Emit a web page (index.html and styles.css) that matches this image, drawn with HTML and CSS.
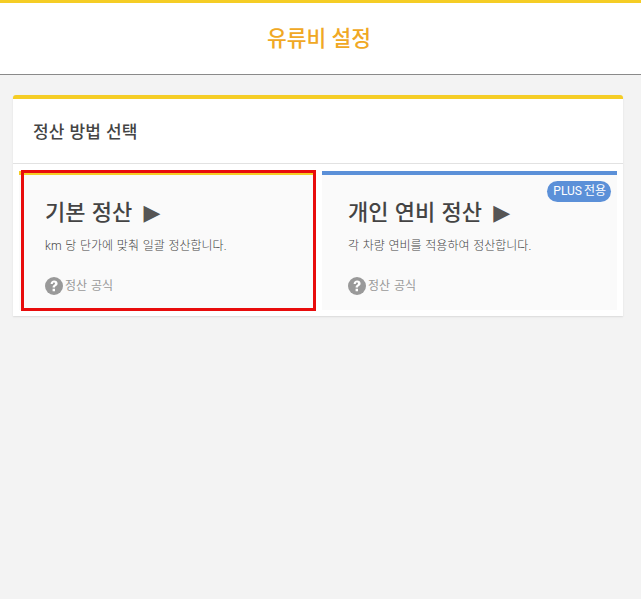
FILE: index.html
```html
<!DOCTYPE html>
<html lang="ko">
<head>
<meta charset="utf-8">
<title>유류비 설정</title>
<link rel="stylesheet" href="styles.css">
</head>
<body>
<header class="top">
  <h1 class="top-title">유류비 설정</h1>
</header>
<main class="panel">
  <h2 class="panel-title">정산 방법 선택</h2>
  <div class="options">
    <section class="option option-basic">
      <h3 class="option-title">기본 정산 <span class="arrow">▶</span></h3>
      <p class="option-desc">km 당 단가에 맞춰 일괄 정산합니다.</p>
      <div class="formula">
        <svg class="help" viewBox="0 0 18 18" aria-hidden="true"><circle cx="9" cy="9" r="9" fill="#999"/><path d="M5.6 7C5.7 4.9 7.1 3.6 9.2 3.6c2 0 3.4 1.2 3.4 2.9 0 1.2-.6 2-1.6 2.6-.8.5-1 .8-1 1.5H7.6c0-1.3.3-1.9 1.3-2.6.8-.5 1.1-.9 1.1-1.4 0-.6-.4-1-1-1-.7 0-1.1.5-1.2 1.4zM7.6 11.8h2.4v2.4H7.6z" fill="#fff"/></svg>
        <span>정산 공식</span>
      </div>
      <div class="selected-mark"></div>
    </section>
    <section class="option option-plus">
      <span class="badge">PLUS 전용</span>
      <h3 class="option-title">개인 연비 정산 <span class="arrow">▶</span></h3>
      <p class="option-desc">각 차량 연비를 적용하여 정산합니다.</p>
      <div class="formula">
        <svg class="help" viewBox="0 0 18 18" aria-hidden="true"><circle cx="9" cy="9" r="9" fill="#999"/><path d="M5.6 7C5.7 4.9 7.1 3.6 9.2 3.6c2 0 3.4 1.2 3.4 2.9 0 1.2-.6 2-1.6 2.6-.8.5-1 .8-1 1.5H7.6c0-1.3.3-1.9 1.3-2.6.8-.5 1.1-.9 1.1-1.4 0-.6-.4-1-1-1-.7 0-1.1.5-1.2 1.4zM7.6 11.8h2.4v2.4H7.6z" fill="#fff"/></svg>
        <span>정산 공식</span>
      </div>
    </section>
  </div>
</main>
</body>
</html>
```
FILE: styles.css
```css
* { box-sizing: border-box; }
html, body { margin: 0; padding: 0; }
body {
  background: #f3f3f3;
  font-family: Roboto, "Noto Sans CJK KR", sans-serif;
  color: #444;
  min-height: 599px;
}
.top {
  height: 75px;
  background: #fff;
  border-top: 3px solid #f5cd25;
  border-bottom: 1px solid #8a8a8a;
  display: flex;
  align-items: center;
  justify-content: center;
  padding-right: 3px;
}
.top-title {
  margin: 0;
  font-size: 21.5px;
  line-height: 30px;
  font-weight: 500;
  color: #f0a824;
}
.panel {
  margin: 20px 18px 0 13px;
  height: 221px;
  background: #fff;
  border-top: 4px solid #f5cd25;
  border-radius: 3px 3px 0 0;
  box-shadow: 0 1px 2px rgba(0,0,0,.1);
}
.panel-title {
  margin: 0;
  height: 65px;
  padding: 0 0 2px 20px;
  display: flex;
  align-items: center;
  font-size: 17px;
  font-weight: 500;
  color: #444;
  word-spacing: 1px;
  border-bottom: 1px solid #e2e2e2;
}
.options {
  display: flex;
  gap: 6px;
  padding: 7px 6px 0;
}
.option {
  position: relative;
  height: 139px;
  background: #fafafa;
  border-top: 4px solid #f5cd25;
  padding: 23px 0 0 26px;
}
.option-basic { flex: 297 1 0; }
.option-plus { flex: 295 1 0; border-top-color: #5b90d8; }
.option-title {
  margin: 0;
  font-size: 22px;
  line-height: 30px;
  font-weight: 500;
  color: #444;
  word-spacing: .8px;
}
.arrow { font-size: 22px; font-family: "DejaVu Sans", sans-serif; color: #555; margin-left: 5px; }
.option-desc {
  margin: 9px 0 0;
  font-size: 12px;
  line-height: 18px;
  font-weight: 300;
  color: #444;
  word-spacing: .8px;
}
.formula {
  margin-top: 22px;
  display: flex;
  align-items: center;
  gap: 2px;
  font-size: 12px;
  line-height: 18px;
  color: #999;
  word-spacing: 1px;
}
.help { width: 18px; height: 18px; flex: none; }
.badge {
  position: absolute;
  top: 6px;
  right: 6px;
  height: 21px;
  padding: 0 5px 0 6px;
  border-radius: 11px;
  background: #5b90d8;
  color: #fff;
  font-size: 12px;
  line-height: 20px;
  word-spacing: -1px;
}
.selected-mark {
  position: absolute;
  top: -5px;
  left: 2px;
  right: 0;
  bottom: -1px;
  border: 3px solid #e80c0c;
  pointer-events: none;
}
```
